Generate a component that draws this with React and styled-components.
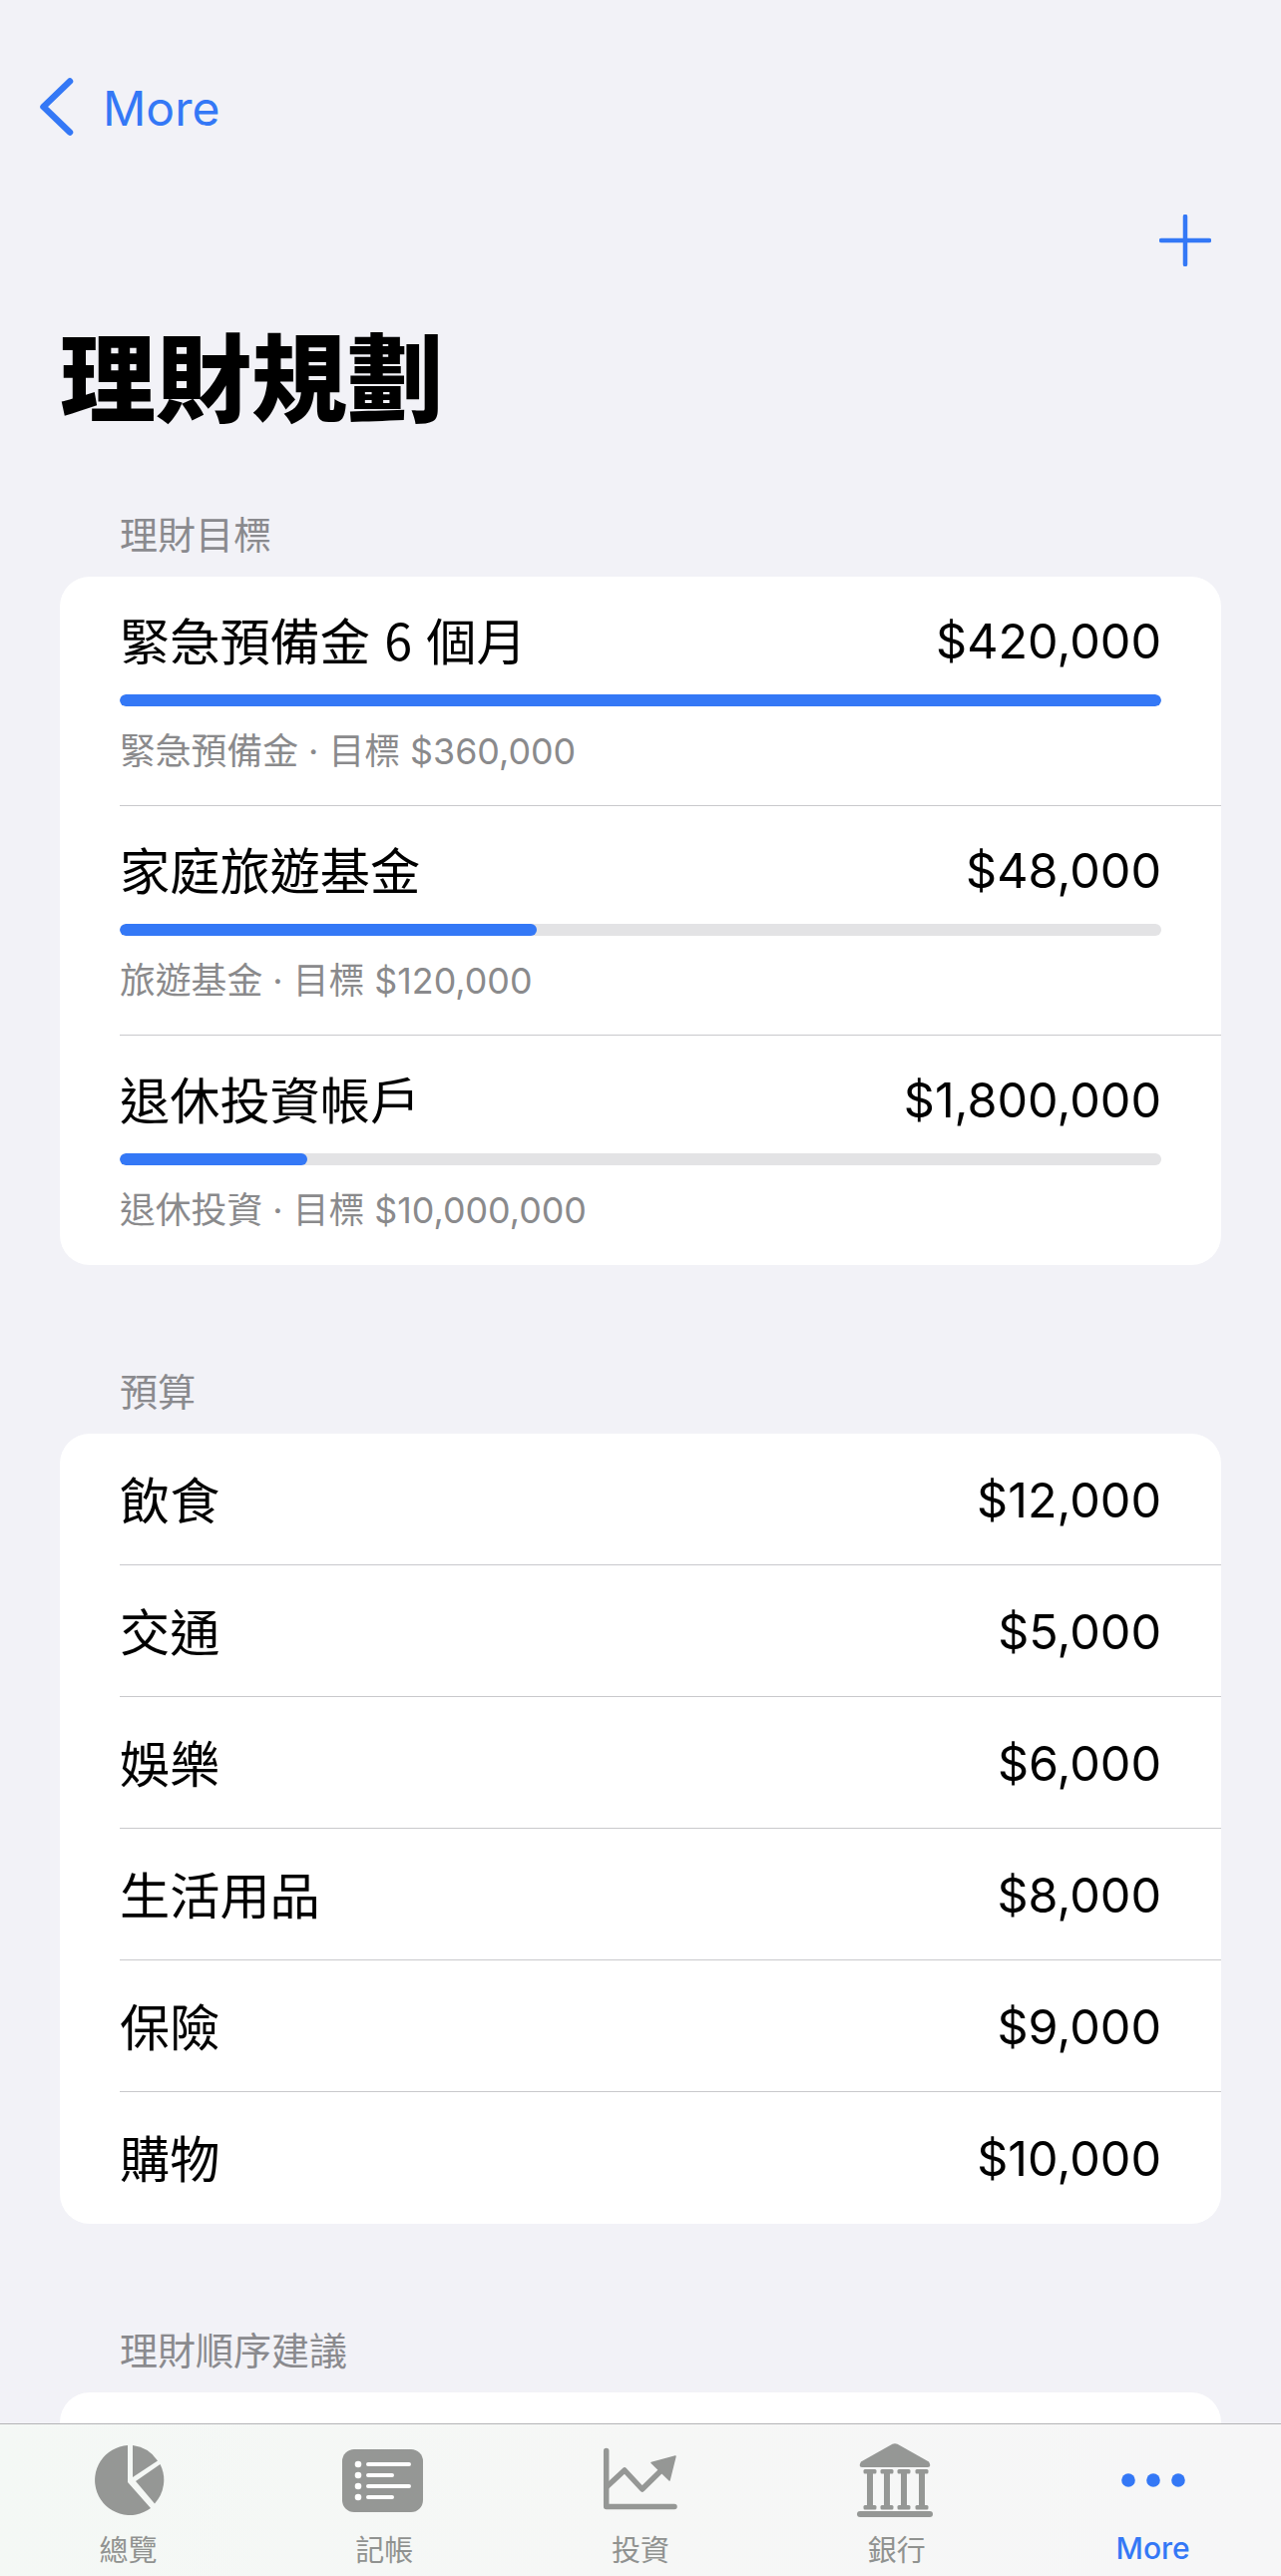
import React from 'react'
import styled, { createGlobalStyle } from 'styled-components'

const GlobalStyle = createGlobalStyle`
  html, body {
    margin: 0;
    padding: 0;
    background: #f2f2f7;
  }
  * {
    box-sizing: border-box;
  }
`

const sans = `Inter, "Noto Sans CJK TC", "Noto Sans", sans-serif`
const cjk = `"Noto Sans CJK TC", Inter, sans-serif`
const BLUE = '#3478f6'

const Screen = styled.div`
  position: relative;
  width: 1284px;
  height: 2582px;
  overflow: hidden;
  background: #f2f2f7;
  font-family: ${sans};
  color: #000;
`
const BackRow = styled.div`
  display: flex;
  align-items: center;
  gap: 29px;
  height: 137px;
  padding: 77px 0 0 40px;
`
const BackLabel = styled.span`
  padding-top: 3px;
  font-size: 48px;
  line-height: 60px;
  color: ${BLUE};
`
const ActionRow = styled.div`
  display: flex;
  justify-content: flex-end;
  align-items: center;
  height: 60px;
  margin-top: 74px;
  padding-right: 70px;
`
const Title = styled.h1`
  margin: 43px 0 75px;
  padding-left: 60px;
  font-family: ${cjk};
  font-size: 96px;
  font-weight: 900;
  line-height: 120px;
`
const Section = styled.section`
  margin: 0 60px 100px;
`
const SectionTitle = styled.div`
  padding-left: 60px;
  margin-bottom: 19px;
  font-family: ${cjk};
  font-size: 38px;
  line-height: 50px;
  color: #8a8a8e;
`
const Card = styled.div`
  background: #fff;
  border-radius: 30px;
  overflow: hidden;
  min-height: ${({ $minHeight }) => $minHeight || 0}px;
`
const RowWrap = styled.div`
  margin-left: 60px;
  padding-right: 60px;
  height: ${({ $height }) => $height}px;
  border-bottom: ${({ $last }) => ($last ? 'none' : '1px solid #c9c9cc')};
`
const GoalInner = styled.div`
  padding-top: 34px;
`
const GoalTop = styled.div`
  display: flex;
  justify-content: space-between;
  align-items: center;
  height: 60px;
`
const RowName = styled.span`
  padding-bottom: 4px;
  font-family: ${cjk};
  font-size: 50.2px;
  line-height: 60px;
  word-spacing: 3px;
`
const RowValue = styled.span`
  padding-top: 2px;
  font-size: 48.500px;
  line-height: 60px;
`
const Track = styled.div`
  height: 12px;
  margin-top: 24px;
  border-radius: 6px;
  background: #e3e3e5;
  overflow: hidden;
`
const Fill = styled.div`
  height: 100%;
  border-radius: 6px;
  background: ${BLUE};
`
const GoalNote = styled.div`
  margin-top: 23px;
  font-family: ${sans};
  font-size: 35.8px;
  line-height: 45px;
  color: #8a8a8c;
`
const BudgetRow = styled(RowWrap)`
  display: flex;
  justify-content: space-between;
  align-items: center;
`
const TabBar = styled.nav`
  position: absolute;
  left: 0;
  right: 0;
  bottom: 0;
  height: 153px;
  display: grid;
  grid-template-columns: repeat(5, 1fr);
  padding-top: 19px;
  border-top: 1px solid #b4b4b6;
  background: linear-gradient(100deg, #f4f8f5 0%, #f6f7f6 50%, #f6f6f7 100%);
`
const TabItem = styled.div`
  display: flex;
  flex-direction: column;
  align-items: center;
`
const TabIcon = styled.div`
  display: flex;
  align-items: center;
  justify-content: center;
  height: 74px;
  padding-left: ${({ $left }) => $left || 0}px;
  padding-right: ${({ $right }) => $right || 0}px;
`
const TabLabel = styled.span`
  margin-top: 13px;
  font-family: ${({ $active }) => ($active ? sans : cjk)};
  font-size: ${({ $active }) => ($active ? 30 : 29)}px;
  font-weight: ${({ $active }) => ($active ? 500 : 400)};
  line-height: 36px;
  color: ${({ $active }) => ($active ? BLUE : '#909290')};
`

const ICON = '#959795'

const ChevronIcon = () => (
  <svg width="34" height="58" viewBox="0 0 34 58" fill="none">
    <path d="M30 3.500 L3.500 29 L30 54.500" stroke={BLUE} strokeWidth="6.500" strokeLinecap="round" strokeLinejoin="round" />
  </svg>
)
const PlusIcon = () => (
  <svg width="52" height="52" viewBox="0 0 52 52" fill="none">
    <path d="M26 2 V50 M2 26 H50" stroke={BLUE} strokeWidth="4.500" strokeLinecap="round" />
  </svg>
)
const PieIcon = () => (
  <svg width="70" height="70" viewBox="0 0 70 70" fill={ICON}>
    <path d="M33 0 V37 L56 63 A35 35 0 1 1 33 0 Z" />
    <path d="M38 0 A35 35 0 0 1 63 15.500 L38 32 Z" />
    <path d="M65.500 19 A35 35 0 0 1 60 58.500 L41 36 Z" />
  </svg>
)
const ListIcon = () => (
  <svg width="81" height="63" viewBox="0 0 81 63">
    <rect width="81" height="63" rx="12" fill={ICON} />
    {[15, 26, 37, 48].map((y) => (
      <circle key={y} cx="16" cy={y} r="3.300" fill="#fff" />
    ))}
    <path d="M26 15 H67 M26 26 H50 M26 37 H67 M26 48 H50" stroke="#fff" strokeWidth="4" strokeLinecap="round" />
  </svg>
)
const ChartIcon = () => (
  <svg width="76" height="66" viewBox="13 13 76 66" fill="none">
    <path d="M16.700 16.500 V72.500 H85" stroke={ICON} strokeWidth="5.500" strokeLinecap="round" strokeLinejoin="round" />
    <path d="M16.700 53 L35 36 L52.700 55 L72 36" stroke={ICON} strokeWidth="5.500" strokeLinejoin="round" />
    <path d="M62 28.500 L86 22 L80 46 Z" fill={ICON} stroke={ICON} strokeWidth="1.500" strokeLinejoin="round" />
  </svg>
)
const BankIcon = () => (
  <svg width="76" height="74" viewBox="0 0 76 74" fill={ICON}>
    <path d="M35.500 0.800 Q38 -0.500 40.500 0.800 L72 18.500 Q75 23.500 71 24 H5 Q1 23.500 4 18.500 Z" />
    {[13, 30, 47, 65].map((x) => (
      <g key={x}>
        <rect x={x - 6.5} y="26" width="13" height="4.500" rx="1.500" />
        <rect x={x - 3} y="28" width="6" height="36" />
        <rect x={x - 6.5} y="62" width="13" height="4.500" rx="1.500" />
      </g>
    ))}
    <rect x="0" y="68" width="76" height="6" rx="3" />
  </svg>
)
const DotsIcon = () => (
  <svg width="64" height="14" viewBox="0 0 64 14" fill={BLUE}>
    <circle cx="7" cy="7" r="6.800" />
    <circle cx="32" cy="7" r="6.800" />
    <circle cx="57" cy="7" r="6.800" />
  </svg>
)

const goals = [
  { name: '緊急預備金 6 個月', value: '$420,000', note: '緊急預備金 · 目標 $360,000', percent: 100 },
  { name: '家庭旅遊基金', value: '$48,000', note: '旅遊基金 · 目標 $120,000', percent: 40 },
  { name: '退休投資帳戶', value: '$1,800,000', note: '退休投資 · 目標 $10,000,000', percent: 18 },
]

const budgets = [
  { name: '飲食', value: '$12,000' },
  { name: '交通', value: '$5,000' },
  { name: '娛樂', value: '$6,000' },
  { name: '生活用品', value: '$8,000' },
  { name: '保險', value: '$9,000' },
  { name: '購物', value: '$10,000' },
]

const tabs = [
  { label: '總覽', Icon: PieIcon, left: 3 },
  { label: '記帳', Icon: ListIcon, right: 3 },
  { label: '投資', Icon: ChartIcon },
  { label: '銀行', Icon: BankIcon, right: 4 },
  { label: 'More', Icon: DotsIcon, active: true },
]

const App = () => {
  return (
    <Screen>
      <GlobalStyle />
      <BackRow>
        <ChevronIcon />
        <BackLabel>More</BackLabel>
      </BackRow>
      <ActionRow>
        <PlusIcon />
      </ActionRow>
      <Title>理財規劃</Title>

      <Section>
        <SectionTitle>理財目標</SectionTitle>
        <Card>
          {goals.map((goal, i) => (
            <RowWrap key={goal.name} $height={230} $last={i === goals.length - 1}>
              <GoalInner>
                <GoalTop>
                  <RowName>{goal.name}</RowName>
                  <RowValue>{goal.value}</RowValue>
                </GoalTop>
                <Track>
                  <Fill style={{ width: `${goal.percent}%` }} />
                </Track>
                <GoalNote>{goal.note}</GoalNote>
              </GoalInner>
            </RowWrap>
          ))}
        </Card>
      </Section>

      <Section>
        <SectionTitle>預算</SectionTitle>
        <Card>
          {budgets.map((item, i) => (
            <BudgetRow key={item.name} $height={132} $last={i === budgets.length - 1}>
              <RowName>{item.name}</RowName>
              <RowValue>{item.value}</RowValue>
            </BudgetRow>
          ))}
        </Card>
      </Section>

      <Section>
        <SectionTitle>理財順序建議</SectionTitle>
        <Card $minHeight={200} />
      </Section>

      <TabBar>
        {tabs.map(({ label, Icon, active, left, right }) => (
          <TabItem key={label}>
            <TabIcon $left={left} $right={right}>
              <Icon />
            </TabIcon>
            <TabLabel $active={active}>{label}</TabLabel>
          </TabItem>
        ))}
      </TabBar>
    </Screen>
  )
}

export default App
